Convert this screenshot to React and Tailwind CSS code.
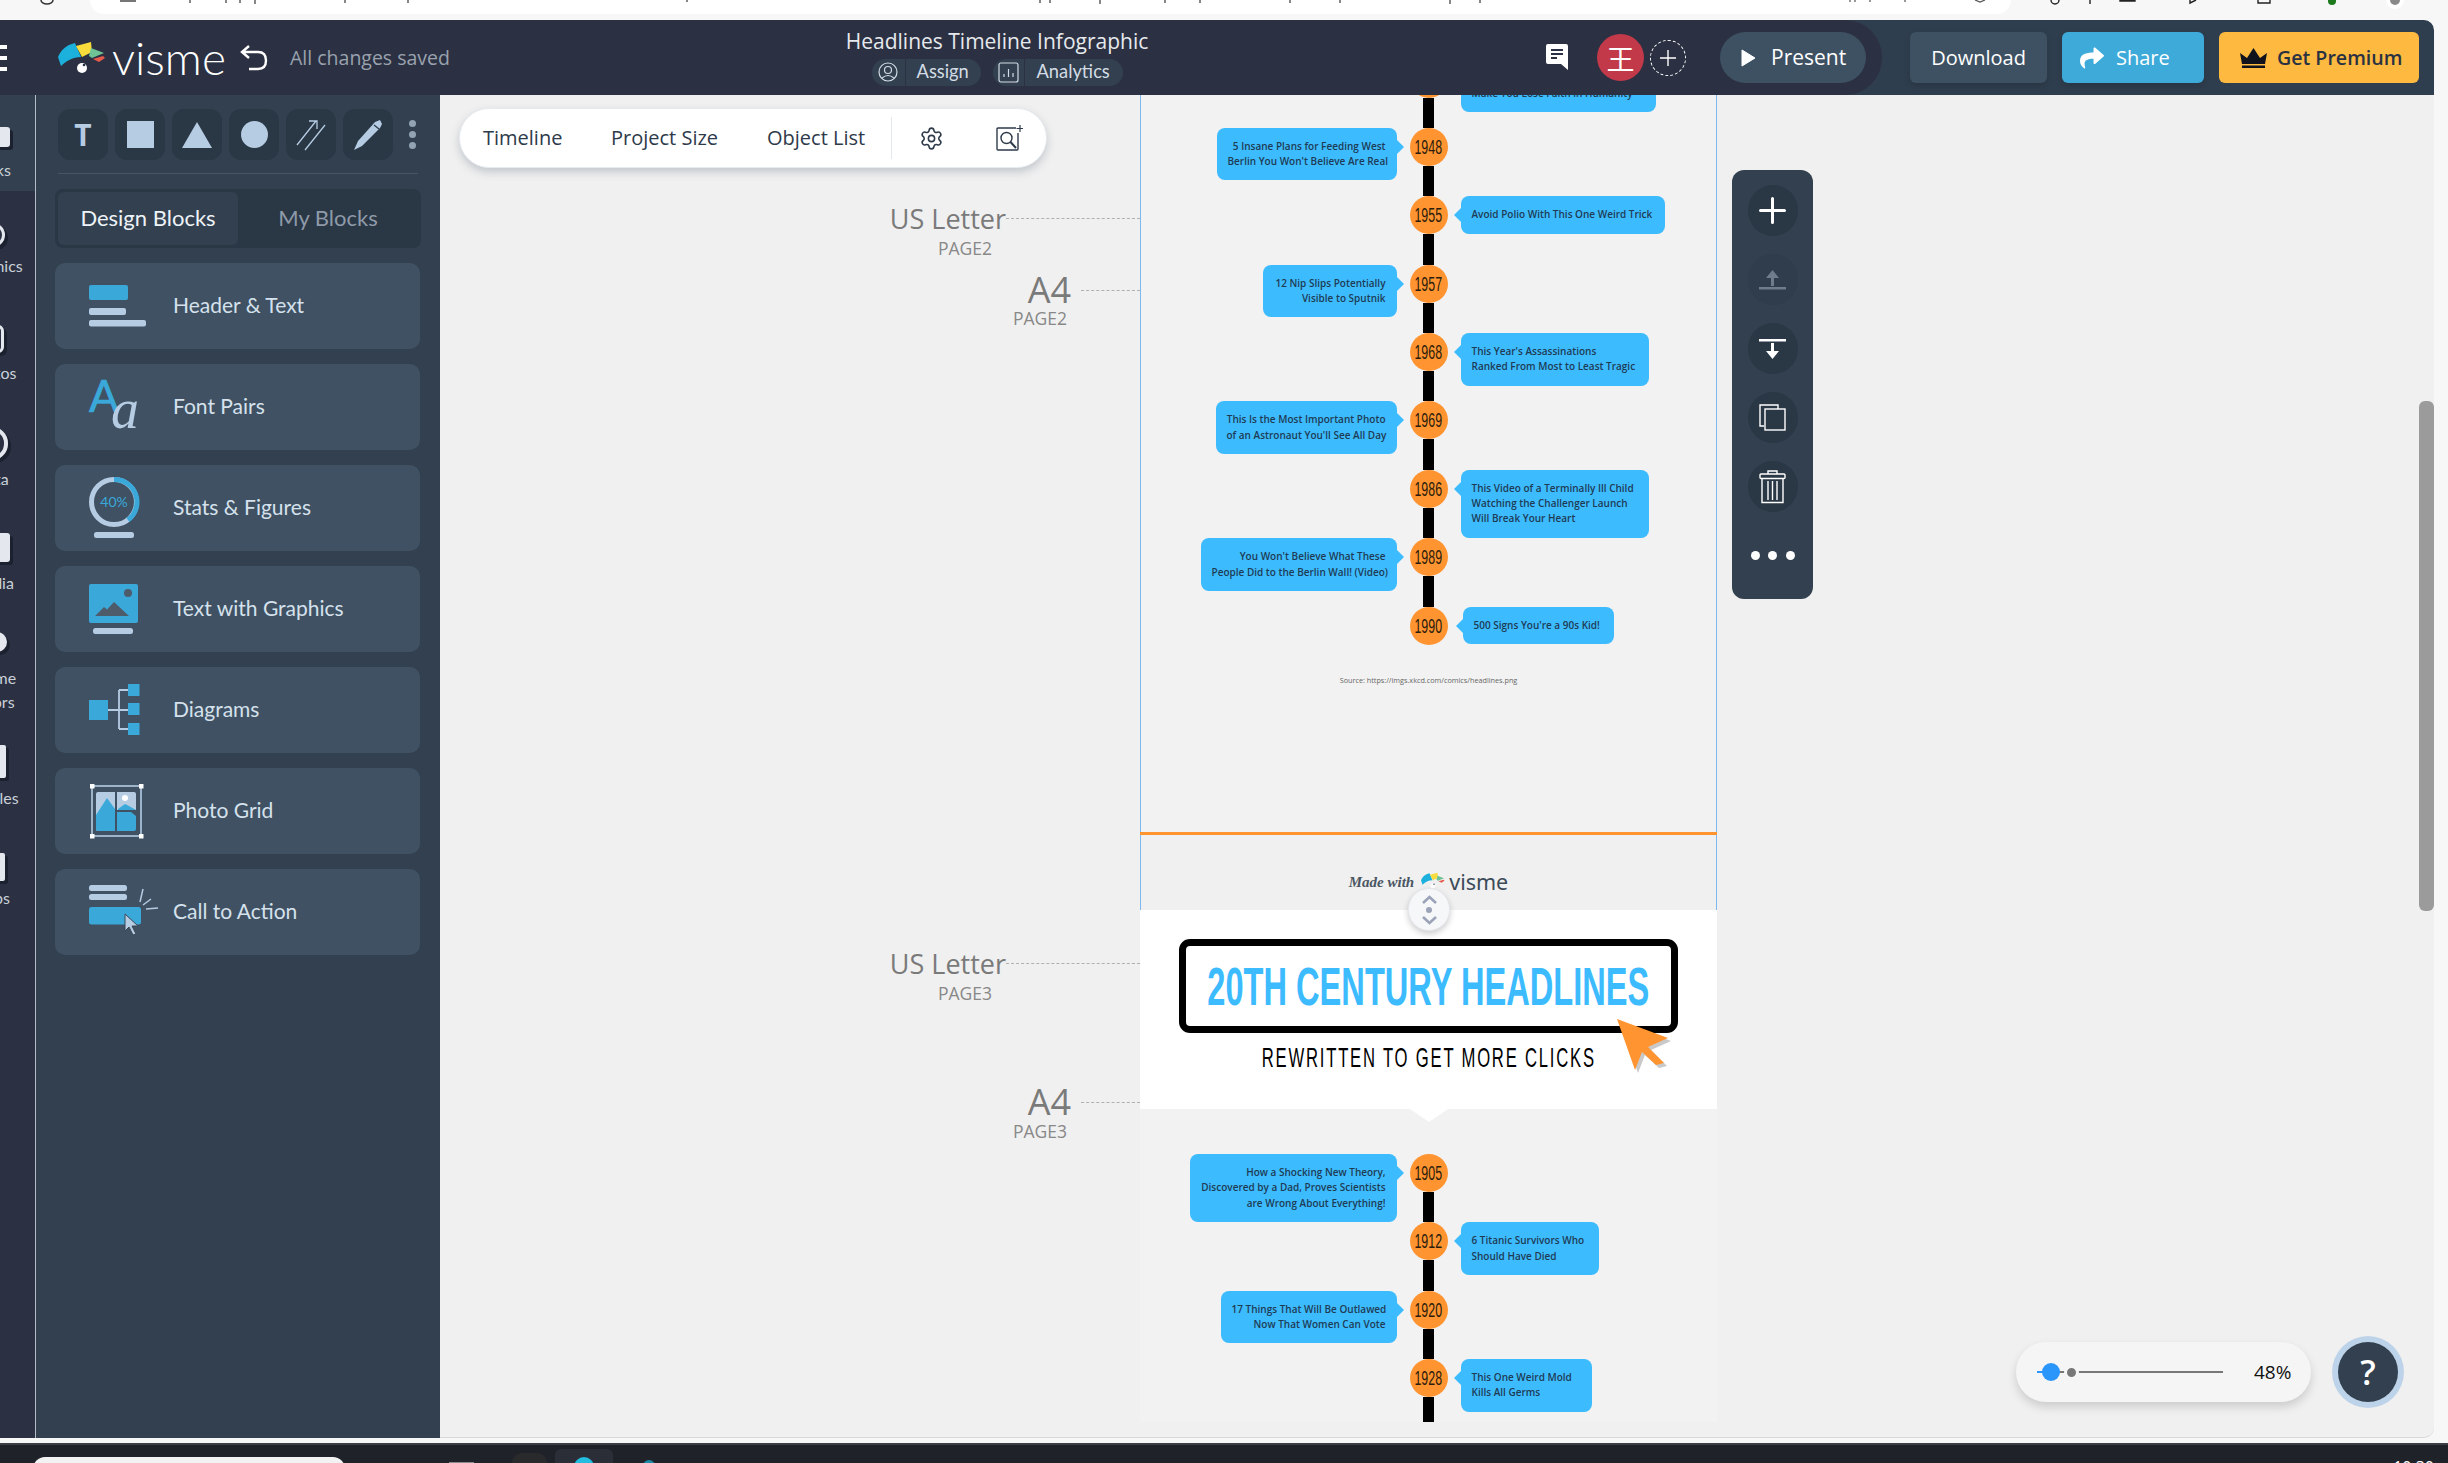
import React from 'react';
import { Settings } from 'lucide-react';
import { FaShare } from 'react-icons/fa';

function Logo({ className }) {
  return (
    <svg viewBox="0 0 48 31" className={className}>
      <path d="M0 15 C3 8 8 3 17 1 L23 15 C15 15 8 19 3 24 Z" fill="#1cb0dc" />
      <path d="M18 4 L33 0 L34 10 L24 15 Z" fill="#f7dc3c" />
      <path d="M33 6 L46 11 L34 16 L31 14 Z" fill="#6fc295" />
      <path d="M35 17 L45 14 L47 16 L41 20 Z" fill="#e65a4c" />
      <circle cx="24" cy="26" r="5" fill="#fff" />
      <circle cx="26" cy="23" r="1.3" fill="#2b3142" />
    </svg>
  );
}

const railItems = [
  { label: ['Blocks'], wrap: 'h-[96px] pt-[32px] bg-[#32404f]', shift: '-ml-[52px]', icon: 'h-[20px] w-[44px] rounded-[3px] bg-[#e4e8ee]', text: 'mt-[11px]' },
  { label: ['Graphics'], wrap: 'pt-[32px]', shift: '-ml-[48px]', icon: 'h-[24px] w-[26px] rounded-full border-[3px] border-[#e4e8ee]', text: 'mt-[7px]' },
  { label: ['Photos'], wrap: 'pt-[47px]', shift: '-ml-[48px]', icon: 'h-[28px] w-[24px] rounded-[6px] border-[3px] border-[#e4e8ee]', text: 'mt-[8px]' },
  { label: ['Data'], wrap: 'pt-[42px]', shift: '-ml-[48px]', icon: 'h-[33px] w-[32px] rounded-full border-[4px] border-[#e4e8ee]', text: 'mt-[7px]' },
  { label: ['Media'], wrap: 'pt-[42px]', shift: '-ml-[48px]', icon: 'h-[29px] w-[36px] rounded-[3px] bg-[#e4e8ee]', text: 'mt-[9px]' },
  { label: ['Theme', 'Colors'], wrap: 'pt-[37px]', shift: '-ml-[48px]', icon: 'h-[20px] w-[30px] rounded-full bg-[#e4e8ee]', text: 'mt-[14px]' },
  { label: ['Articles'], wrap: 'pt-[31px]', shift: '-ml-[48px]', icon: 'h-[33px] w-[28px] rounded-[2px] bg-[#e4e8ee]', text: 'mt-[8px]' },
  { label: ['Apps'], wrap: 'pt-[43px]', shift: '-ml-[48px]', icon: 'h-[28px] w-[26px] rounded-[2px] bg-[#e4e8ee]', text: 'mt-[5px]' },
];

function Rail() {
  return (
    <div className="w-[36px] shrink-0 overflow-hidden border-r border-r-[#b6bcc4] bg-[#2b3142]">
      {railItems.map((r) => (
        <div key={r.label[0]} className={r.wrap}>
          <div className={`flex w-[80px] flex-col items-center ${r.shift}`}>
            <div className={`shadow-[3px_3px_0_#1c2130] ${r.icon}`} />
            <div className={`text-center font-['Lato'] text-[16px] leading-[24px] text-[#c9d0d8] ${r.text}`}>
              {r.label.map((l) => (
                <div key={l}>{l}</div>
              ))}
            </div>
          </div>
        </div>
      ))}
    </div>
  );
}

function ToolBtn({ children }) {
  return (
    <div className="flex h-[51px] w-[50px] items-center justify-center rounded-[12px] bg-[#2a3745]">{children}</div>
  );
}

const LIGHT = '#b6cce3';
const BLUE = '#3aa9da';

const blocks = [
  {
    name: 'Header & Text',
    icon: (
      <>
        <rect x="0" y="22" width="39" height="15" rx="2" fill={BLUE} />
        <rect x="0" y="45" width="37" height="7" rx="2" fill={LIGHT} />
        <rect x="0" y="57" width="57" height="6.5" rx="2" fill={LIGHT} />
      </>
    ),
  },
  {
    name: 'Font Pairs',
    icon: (
      <>
        <text x="0" y="48" fontFamily="Lato" fontSize="44" stroke={BLUE} strokeWidth="0.7" fill={BLUE}>A</text>
        <text x="22" y="64" fontFamily="Liberation Serif" fontStyle="italic" fontSize="56" fill={LIGHT}>a</text>
      </>
    ),
  },
  {
    name: 'Stats & Figures',
    icon: (
      <>
        <circle cx="25" cy="37" r="22.5" fill="none" stroke={LIGHT} strokeWidth="5" />
        <path d="M25 14.5 A22.5 22.5 0 0 1 39 55" fill="none" stroke={BLUE} strokeWidth="5" />
        <text x="25" y="42" textAnchor="middle" fontFamily="Lato" fontSize="14" fill={BLUE}>40%</text>
        <rect x="5" y="67" width="40" height="6" rx="2.5" fill={LIGHT} />
      </>
    ),
  },
  {
    name: 'Text with Graphics',
    icon: (
      <>
        <rect x="0" y="18" width="49" height="39" rx="2" fill={BLUE} />
        <circle cx="39" cy="27" r="4" fill="#4e5b6a" />
        <path d="M6 50 L15 41 L18 43.5 L25 36 L40 50 Z" fill="#4e5b6a" />
        <rect x="4" y="62" width="40" height="6" rx="2.5" fill={LIGHT} />
      </>
    ),
  },
  {
    name: 'Diagrams',
    icon: (
      <>
        <path d="M19 43 H39 M30 23 V62 M30 23 H39 M30 62 H39" fill="none" stroke={LIGHT} strokeWidth="1.8" />
        <rect x="0" y="33" width="19" height="20" fill={BLUE} />
        <rect x="39" y="17" width="11.5" height="12" fill={BLUE} />
        <rect x="39" y="36" width="11.5" height="12" fill={BLUE} />
        <rect x="39" y="56" width="11.5" height="12" fill={BLUE} />
      </>
    ),
  },
  {
    name: 'Photo Grid',
    icon: (
      <>
        <rect x="3" y="18" width="49" height="50" fill="none" stroke={LIGHT} strokeWidth="1.6" />
        <rect x="1" y="16" width="4.5" height="4.5" fill="#fff" />
        <rect x="50" y="16" width="4.5" height="4.5" fill="#fff" />
        <rect x="1" y="66" width="4.5" height="4.5" fill="#fff" />
        <rect x="50" y="66" width="4.5" height="4.5" fill="#fff" />
        <path d="M7 26 Q7 24 9 24 H26 V63 H9 Q7 63 7 61 Z" fill={LIGHT} />
        <path d="M7 47 L18 30 L26 41 V63 H9 Q7 63 7 61 Z" fill={BLUE} />
        <path d="M28 24 H45 Q47 24 47 26 V42 H28 Z" fill={LIGHT} />
        <circle cx="36" cy="30" r="3" fill="#fff" />
        <path d="M29 41 L36 36 L40 38 L47 42 H29 Z" fill={BLUE} />
        <path d="M28 44 H42 L47 48 V61 Q47 63 45 63 H28 Z" fill={BLUE} />
      </>
    ),
  },
  {
    name: 'Call to Action',
    icon: (
      <>
        <rect x="0" y="16" width="38" height="6" rx="2.5" fill={LIGHT} />
        <rect x="0" y="25" width="38" height="6" rx="2.5" fill={LIGHT} />
        <rect x="0" y="38" width="52" height="17.5" rx="2.5" fill={BLUE} />
        <path d="M36 45 L36 62 L40 58 L44 66 L47 65 L43 57 L49 57 Z" fill={LIGHT} stroke="#3a4655" strokeWidth="1" />
        <path d="M51 33 L54 20 M54 36 L62 30 M57 40 L69 39" stroke={LIGHT} strokeWidth="1.5" fill="none" />
      </>
    ),
  },
];

function Panel() {
  return (
    <div className="flex w-[404px] shrink-0 flex-col bg-[#32404f] pl-[19px] pr-[20px] pt-[14px]">
      <div className="flex items-center gap-[7px] pl-[3px]">
        <ToolBtn>
          <span className="font-['Open_Sans'] text-[30px] font-bold leading-none text-[#b6cce3]">T</span>
        </ToolBtn>
        <ToolBtn>
          <div className="h-[27px] w-[27px] bg-[#b6cce3]" />
        </ToolBtn>
        <ToolBtn>
          <svg width="30" height="26" viewBox="0 0 30 26"><path d="M15 0 L30 26 H0 Z" fill="#b6cce3" /></svg>
        </ToolBtn>
        <ToolBtn>
          <div className="h-[27px] w-[27px] rounded-full bg-[#b6cce3]" />
        </ToolBtn>
        <ToolBtn>
          <svg width="30" height="32" viewBox="0 0 30 32" fill="none" stroke="#b6cce3" strokeWidth="1.3">
            <path d="M1 26 L20 2 M13 2 H21 V10 M9 31 L29 6" />
          </svg>
        </ToolBtn>
        <ToolBtn>
          <svg width="30" height="30" viewBox="0 0 30 30"><path d="M22 2 L27 0 L29 4 L27 8 L9 26 L1 30 L5 21 Z" fill="#b6cce3" /><path d="M21 5 L26 9" stroke="#2a3745" strokeWidth="1.3" /></svg>
        </ToolBtn>
        <div className="ml-[9px] flex flex-col gap-[4px]">
          <div className="h-[7px] w-[7px] rounded-full bg-[#93a3b3]" />
          <div className="h-[7px] w-[7px] rounded-full bg-[#93a3b3]" />
          <div className="h-[7px] w-[7px] rounded-full bg-[#93a3b3]" />
        </div>
      </div>
      <div className="ml-[3px] mr-[2px] mt-[13px] h-[1px] bg-[#465665]" />
      <div className="mt-[15px] flex h-[59px] w-[366px] rounded-[8px] bg-[#2a3745] p-[3px]">
        <div className="flex w-[180px] items-center justify-center rounded-[6px] bg-[#32404f] pb-[3px] font-['Lato'] text-[22px] text-[#eef3f8]">Design Blocks</div>
        <div className="flex flex-1 items-center justify-center pb-[3px] font-['Lato'] text-[22px] text-[#8e9aa9]">My Blocks</div>
      </div>
      <div className="mt-[15px] flex flex-col gap-[15px]">
        {blocks.map((b) => (
          <div key={b.name} className="flex h-[86px] w-[365px] items-center rounded-[10px] bg-[#3f5163] pl-[34px]">
            <svg width="84" height="86" viewBox="0 0 84 86" className="shrink-0 overflow-visible">{b.icon}</svg>
            <span className="pb-[3px] font-['Lato'] text-[21px] text-[#d5e1ec]">{b.name}</span>
          </div>
        ))}
      </div>
    </div>
  );
}

function Node({ year, connector }) {
  return (
    <div className="flex flex-col items-center">
      <div className="flex h-[38px] w-[38px] shrink-0 items-center justify-center rounded-full bg-[#ff9430]">
        <span className="inline-block scale-x-[0.62] whitespace-nowrap font-['Liberation_Sans'] text-[20px] leading-none text-[#2b1c0c]">{year}</span>
      </div>
      {connector && <div className="h-[30.4px] w-[11px] shrink-0 bg-black" />}
    </div>
  );
}

function Row({ year, side, w, lines, connector = true, extra = '' }) {
  const bubble = (
    <div className={`relative rounded-[8px] bg-[#3dbbff] px-[11px] py-[11px] font-['Open_Sans'] text-[10px] font-semibold leading-[15.3px] text-[#1d3c54] ${w} ${extra} ${side === 'l' ? 'text-right' : 'text-left'}`}>
      {lines.map((l) => (
        <div key={l} className="whitespace-nowrap">{l}</div>
      ))}
      <div className={side === 'l'
        ? 'absolute -right-[7px] top-[12px] h-0 w-0 border-y-[7px] border-l-[7px] border-y-transparent border-l-[#3dbbff]'
        : 'absolute -left-[7px] top-[12px] h-0 w-0 border-y-[7px] border-r-[7px] border-y-transparent border-r-[#3dbbff]'} />
    </div>
  );
  return (
    <div className="grid h-[68.4px] grid-cols-[1fr_38px_1fr] items-start gap-x-[13px]">
      <div className="flex justify-end">{side === 'l' && bubble}</div>
      <Node year={year} connector={connector} />
      <div className="flex justify-start">{side === 'r' && bubble}</div>
    </div>
  );
}

function PageLabel({ pos, size, name, page, line, gap, mr, rowH }) {
  return (
    <div className={`absolute left-0 flex w-[700px] flex-col ${pos}`}>
      <div className="flex h-[36px] items-center justify-end">
        <span className={`whitespace-nowrap font-['Open_Sans'] leading-none text-[#7a7a7a] ${size}`}>{name}</span>
        <div className={`border-t border-dashed border-t-[#b0b0b0] ${line} ${gap}`} />
      </div>
      <div className={`flex items-center justify-end font-['Open_Sans'] text-[17.5px] leading-none text-[#888888] ${mr} ${rowH}`}>{page}</div>
    </div>
  );
}

function Document() {
  return (
    <div className="-mt-[40px] ml-[700px] w-[577px]">
      <div className="h-[777px] overflow-hidden border-x border-x-[#7db9f0] bg-[#f2f2f2] pt-[4.5px]">
        <Row year="1942" side="r" w="w-[195px]" lines={['\u00a0', 'Make You Lose Faith in Humanity']} />
        <Row year="1948" side="l" w="w-[180px]" lines={['5 Insane Plans for Feeding West', "Berlin You Won't Believe Are Real"]} />
        <Row year="1955" side="r" w="w-[204px]" lines={['Avoid Polio With This One Weird Trick']} />
        <Row year="1957" side="l" w="w-[134px]" lines={['12 Nip Slips Potentially', 'Visible to Sputnik']} />
        <Row year="1968" side="r" w="w-[188px]" lines={["This Year's Assassinations", 'Ranked From Most to Least Tragic']} />
        <Row year="1969" side="l" w="w-[181px]" lines={['This Is the Most Important Photo', "of an Astronaut You'll See All Day"]} />
        <Row year="1986" side="r" w="w-[188px]" lines={['This Video of a Terminally Ill Child', 'Watching the Challenger Launch', 'Will Break Your Heart']} />
        <Row year="1989" side="l" w="w-[196px]" lines={["You Won't Believe What These", 'People Did to the Berlin Wall! (Video)']} />
        <Row year="1990" side="r" w="w-[151px]" extra="ml-[2px]" connector={false} lines={["500 Signs You're a 90s Kid!"]} />
        <div className="text-center font-['Open_Sans'] text-[7.25px] leading-[10px] text-[#666666]">Source: https://imgs.xkcd.com/comics/headlines.png</div>
      </div>
      <div className="h-[3px] bg-[#ff9430]" />
      <div className="flex h-[75px] items-start justify-center gap-[7px] border-x border-x-[#7db9f0] bg-[#f0f0f0] pt-[36px]">
        <span className="font-['Liberation_Serif'] text-[15px] font-bold italic leading-[22px] text-[#4a5663]">Made with</span>
        <Logo className="mt-[1px] h-[17px] w-[24px]" />
        <span className="-ml-[3px] font-['Noto_Sans'] text-[21.5px] leading-[22px] text-[#3c4a58]">visme</span>
      </div>
      <div className="relative flex h-[199px] flex-col items-center bg-white pt-[29px]">
        <div className="flex h-[94px] w-[499px] items-center justify-center rounded-[11px] border-[7px] border-black">
          <span className="inline-block scale-x-[0.615] whitespace-nowrap font-['Liberation_Sans'] text-[53px] font-bold leading-none text-[#3dbbff]">20TH CENTURY HEADLINES</span>
        </div>
        <span className="mt-[10px] inline-block scale-x-[0.595] whitespace-nowrap font-['Liberation_Sans'] text-[28px] leading-[30px] tracking-[3px] text-black">REWRITTEN TO GET MORE CLICKS</span>
        <svg width="60" height="60" viewBox="0 0 60 60" className="absolute left-[477px] top-[109px] overflow-visible">
          <path d="M3 3 L54 22 L34 31 L50 47 L42 49 L28 36 L21 54 Z" fill="#c9c9c9" />
          <path d="M0 0 L51 19 L31 28 L47 44 L39 46 L25 33 L18 51 Z" fill="#ff9430" />
        </svg>
        <div className="absolute left-[268px] top-[-22px] flex h-[43px] w-[42px] flex-col items-center justify-center gap-[3px] rounded-full border border-[#e4e7ec] bg-[#f6f7f9] shadow-[0_3px_6px_rgba(0,0,0,0.2)]">
          <svg width="15" height="9" viewBox="0 0 15 9" fill="none" stroke="#9aa3b8" strokeWidth="2.6"><path d="M1 8 L7.5 2 L14 8" /></svg>
          <div className="h-[6px] w-[6px] rounded-full bg-[#9aa3b8]" />
          <svg width="15" height="9" viewBox="0 0 15 9" fill="none" stroke="#9aa3b8" strokeWidth="2.6"><path d="M1 1 L7.5 7 L14 1" /></svg>
        </div>
      </div>
      <div className="h-[313px] overflow-hidden bg-[#f2f2f2]">
        <div className="mx-auto h-0 w-0 border-x-[19px] border-t-[13px] border-x-transparent border-t-white" />
        <div className="pt-[32px]">
          <Row year="1905" side="l" w="w-[207px]" lines={['How a Shocking New Theory,', 'Discovered by a Dad, Proves Scientists', 'are Wrong About Everything!']} />
          <Row year="1912" side="r" w="w-[138px]" lines={['6 Titanic Survivors Who', 'Should Have Died']} />
          <Row year="1920" side="l" w="w-[176px]" lines={['17 Things That Will Be Outlawed', 'Now That Women Can Vote']} />
          <Row year="1928" side="r" w="w-[131px]" lines={['This One Weird Mold', 'Kills All Germs']} />
        </div>
      </div>
    </div>
  );
}

function SideBtn({ children, dim }) {
  return (
    <div className={`flex h-[51px] w-[50px] items-center justify-center rounded-full ${dim ? 'bg-[#2f3d4c]' : 'bg-[#2a3745]'}`}>{children}</div>
  );
}

function Canvas() {
  return (
    <div className="relative flex-1 overflow-hidden rounded-br-[10px] border-b border-b-[#d9d9d9] bg-[#f0f0f0]">
      <Document />

      <PageLabel pos="top-[105px]" size="text-[27px]" name="US Letter" page="PAGE2" line="w-[134px]" gap="ml-[0px]" mr="mr-[148px]" rowH="h-[26px]" />
      <PageLabel pos="top-[177px]" size="text-[36px]" name="A4" page="PAGE2" line="w-[59px]" gap="ml-[10px]" mr="mr-[73px]" rowH="h-[21px]" />
      <PageLabel pos="top-[850px]" size="text-[27px]" name="US Letter" page="PAGE3" line="w-[134px]" gap="ml-[0px]" mr="mr-[148px]" rowH="h-[26px]" />
      <PageLabel pos="top-[989px]" size="text-[36px]" name="A4" page="PAGE3" line="w-[59px]" gap="ml-[10px]" mr="mr-[73px]" rowH="h-[23px]" />

      <div className="absolute left-[19px] top-[13px] flex h-[60px] w-[588px] items-center rounded-full border border-[#e6ebf0] bg-white pl-[23px] font-['Open_Sans'] text-[20px] text-[#2d3a4a] shadow-[0_4px_8px_rgba(60,80,100,0.25)]">
        <span className="w-[128px] whitespace-nowrap">Timeline</span>
        <span className="w-[156px] whitespace-nowrap">Project Size</span>
        <span className="w-[124px] whitespace-nowrap">Object List</span>
        <div className="h-[42px] w-[1px] bg-[#e2e8ee]" />
        <Settings size={25} strokeWidth={1.5} className="ml-[27px] text-[#2d3a4a]" />
        <svg width="27" height="27" viewBox="0 0 27 27" fill="none" stroke="#2d3a4a" strokeWidth="1.4" className="ml-[52px]">
          <path d="M20 3 H2 Q1 3 1 4 V24 Q1 25 2 25 H21 Q22 25 22 24 V8" />
          <circle cx="10.5" cy="13" r="5.5" />
          <path d="M14.5 17 L20 23" strokeWidth="2" />
          <path d="M24 0 V7 M20.5 3.5 H27" strokeWidth="1.2" />
        </svg>
      </div>

      <div className="absolute left-[1292px] top-[75px] flex h-[429px] w-[81px] flex-col items-center gap-[18px] rounded-[12px] bg-[#32404f] pt-[15px]">
        <SideBtn>
          <svg width="27" height="27" viewBox="0 0 27 27" stroke="#fff" strokeWidth="3" strokeLinecap="round"><path d="M13.5 1.5 V25.5 M1.5 13.5 H25.5" /></svg>
        </SideBtn>
        <SideBtn dim>
          <svg width="27" height="20" viewBox="0 0 27 20"><path d="M13.5 0 L20 8 H15 V16 H12 V8 H7 Z" fill="#6f7d8b" /><rect x="0" y="17" width="27" height="2.5" fill="#6f7d8b" /></svg>
        </SideBtn>
        <SideBtn>
          <svg width="27" height="20" viewBox="0 0 27 20"><rect x="0" y="0" width="27" height="2.5" fill="#fff" /><path d="M13.5 20 L20 12 H15 V4 H12 V12 H7 Z" fill="#fff" /></svg>
        </SideBtn>
        <SideBtn>
          <svg width="27" height="27" viewBox="0 0 27 27" fill="none" stroke="#fff" strokeWidth="1.4"><path d="M5 22 H1 V1 H19 V5" /><rect x="6" y="5" width="20" height="21" /></svg>
        </SideBtn>
        <SideBtn>
          <svg width="27" height="34" viewBox="0 0 27 34" fill="none" stroke="#fff" strokeWidth="1.4"><path d="M9 4 V1 H18 V4" /><rect x="1" y="4" width="25" height="4.5" rx="1" /><path d="M3 8.5 V32.5 H24 V8.5 M9 11 V30 M13.5 11 V30 M18 11 V30" /></svg>
        </SideBtn>
        <div className="mt-[21px] flex gap-[8.5px]">
          <div className="h-[9px] w-[9px] rounded-full bg-white" />
          <div className="h-[9px] w-[9px] rounded-full bg-white" />
          <div className="h-[9px] w-[9px] rounded-full bg-white" />
        </div>
      </div>

      <div className="absolute right-0 top-[306px] h-[510px] w-[15px] rounded-[6px] bg-[#9b9b9b]" />

      <div className="absolute left-[1576px] top-[1247px] flex h-[60px] w-[295px] items-center rounded-full bg-[#f5f5f5] shadow-[0_5px_10px_rgba(0,0,0,0.15)]">
        <div className="relative ml-[21px] h-[2px] w-[186px] bg-[#777777]">
          <div className="absolute -top-[8px] left-[5px] h-[18px] w-[18px] rounded-full bg-[#2a96fb]" />
          <div className="absolute left-0 top-0 h-[2px] w-[8px] bg-[#2a96fb]" />
          <div className="absolute -top-[6.5px] left-[27px] h-[15px] w-[15px] rounded-full border-[3px] border-[#f5f5f5] bg-[#777777]" />
        </div>
        <span className="ml-[31px] font-['Open_Sans'] text-[19px] leading-none text-[#111111]">48%</span>
      </div>

      <div className="absolute left-[1898px] top-[1247px] flex h-[60px] w-[60px] items-center justify-center rounded-full bg-[#32404f] font-['Open_Sans'] text-[34px] font-semibold leading-none text-white shadow-[0_0_0_6px_#bdd3ea]">?</div>
    </div>
  );
}

function Header() {
  return (
    <div className="flex h-[75px] shrink-0 rounded-tr-[10px] bg-[#2f3e4e]">
      <div className="flex w-[1882px] shrink-0 items-center rounded-r-[37px] bg-[#2b3142]">
        <div className="flex w-[7px] flex-col gap-[7px]">
          <div className="h-[4px] bg-white" />
          <div className="h-[4px] bg-white" />
          <div className="h-[4px] bg-white" />
        </div>
        <Logo className="ml-[51px] h-[31px] w-[48px] shrink-0" />
        <span className="ml-[6px] w-[112px] font-['Lato'] text-[46px] font-light leading-none text-white">visme</span>
        <svg width="28" height="26" viewBox="0 0 28 26" fill="none" stroke="#fff" strokeWidth="2.4" className="ml-[16px] shrink-0">
          <path d="M9 1 L2 7 L9 13 M2 7 H18 Q26 7 26 15.5 Q26 24 18 24 H9" />
        </svg>
        <span className="ml-[22px] w-[160px] whitespace-nowrap font-['Open_Sans'] text-[19.5px] text-[#9aa2ae]">All changes saved</span>
        <div className="mb-[3px] ml-[396px] flex w-[302px] shrink-0 flex-col items-center">
          <span className="whitespace-nowrap font-['Open_Sans'] text-[21px] leading-[28px] text-[#e6e9ed]">Headlines Timeline Infographic</span>
          <div className="mt-[4px] flex gap-[12px] font-['Lato'] text-[18.3px] text-[#d3dce5]">
            <div className="flex h-[27px] w-[109px] items-center rounded-full bg-[#32404f]">
              <div className="flex h-full w-[34px] items-center justify-center border-r border-r-[#2b3142]">
                <svg width="20" height="22" viewBox="0 0 20 22" fill="none" stroke="#d3dce5" strokeWidth="1.2"><circle cx="10" cy="11" r="9" /><circle cx="10" cy="9" r="3.5" /><path d="M4 17 Q10 12 16 17" /></svg>
              </div>
              <span className="ml-[11px]">Assign</span>
            </div>
            <div className="flex h-[27px] w-[130px] items-center rounded-full bg-[#32404f]">
              <div className="flex h-full w-[32px] items-center justify-center border-r border-r-[#2b3142]">
                <svg width="21" height="21" viewBox="0 0 21 21" fill="none" stroke="#d3dce5" strokeWidth="1.2"><rect x="1" y="1" width="19" height="19" rx="2" /><path d="M6 15 V12 M10.500 15 V7 M15 15 V11" /></svg>
              </div>
              <span className="ml-[12px]">Analytics</span>
            </div>
          </div>
        </div>
        <svg width="22" height="27" viewBox="0 0 22 27" className="ml-[398px] shrink-0">
          <path d="M2 0 H20 Q22 0 22 2 V26 L15 20 H2 Q0 20 0 18 V2 Q0 0 2 0 Z" fill="#fff" />
          <path d="M5 6 H17 M5 10 H17 M5 14 H11" stroke="#2b3142" strokeWidth="1.8" />
        </svg>
        <div className="ml-[29px] flex h-[47px] w-[47px] shrink-0 items-center justify-center rounded-full bg-[#c2394a] font-['Noto_Sans_CJK_SC',sans-serif] text-[28px] leading-none text-white">王</div>
        <div className="ml-[6px] flex h-[36px] w-[36px] shrink-0 items-center justify-center rounded-full border border-dashed border-white">
          <svg width="18" height="18" viewBox="0 0 18 18" stroke="#fff" strokeWidth="1.4"><path d="M9 1 V17 M1 9 H17" /></svg>
        </div>
        <div className="ml-[34px] flex h-[51px] w-[146px] shrink-0 items-center rounded-full bg-[#3e5162] pl-[21px]">
          <svg width="14" height="18" viewBox="0 0 14 18"><path d="M1 1 L14 9 L1 17 Z" fill="#fff" stroke="#fff" strokeLinejoin="round" /></svg>
          <span className="ml-[16px] font-['Open_Sans'] text-[21px] text-white">Present</span>
        </div>
      </div>
      <div className="ml-[28px] flex h-[51px] w-[137px] items-center justify-center self-center rounded-[6px] bg-[#3e5162] font-['Open_Sans'] text-[20px] text-white shadow-[0_3px_6px_rgba(0,0,0,0.15)]">Download</div>
      <div className="ml-[15px] flex h-[51px] w-[142px] items-center self-center rounded-[6px] bg-[#3daad9] pl-[18px] font-['Open_Sans'] text-[20px] text-white shadow-[0_3px_6px_rgba(0,0,0,0.15)]">
        <FaShare size={24} />
        <span className="ml-[12px]">Share</span>
      </div>
      <div className="ml-[15px] flex h-[51px] w-[200px] items-center self-center rounded-[6px] bg-[#fdb940] pl-[20px] font-['Open_Sans'] text-[19.6px] font-semibold text-[#2a3242]">
        <svg width="29" height="20" viewBox="0 0 29 20" className="shrink-0"><path d="M1 5 L8 10 L14.500 0 L21 10 L28 5 L26 16 H3 Z" fill="#10131c" /><rect x="3" y="17.500" width="23" height="2.500" fill="#10131c" /></svg>
        <span className="ml-[9px] whitespace-nowrap">Get Premium</span>
      </div>
    </div>
  );
}

function ChromeStrip() {
  return (
    <div className="relative h-[20px] shrink-0">
      <div className="ml-[90px] h-[14px] w-[1921px] rounded-b-[20px] bg-white" />
      <svg width="2448" height="20" viewBox="0 0 2448 20" className="absolute left-0 top-0">
        <path d="M41 0 A6 4 0 0 0 53 0" fill="none" stroke="#333" strokeWidth="1.5" />
        <rect x="120" y="0" width="16" height="2" fill="#777" />
        <path d="M190 0 V3 M226 0 V3 M240 0 V3 M255 0 V4 M345 0 V3 M408 0 V3 M687 0 V2" stroke="#555" strokeWidth="1.4" />
        <path d="M1040 0 V3 M1050 0 V3 M1100 0 V4 M1165 0 V3 M1200 0 V3 M1290 0 V3 M1340 0 V3 M1450 0 V4 M1480 0 V3" stroke="#555" strokeWidth="1.4" />
        <path d="M1850 0 V2 M1855 0 V2 M1870 0 V2 M1905 0 V2 M1975 0 L1980 2 L1985 0" stroke="#555" strokeWidth="1.2" fill="none" />
        <circle cx="2055" cy="0" r="4" fill="none" stroke="#222" strokeWidth="1.4" />
        <path d="M2090 0 V4 M2120 0 H2135 V1 H2120 Z M2190 0 L2190 3 L2196 0 M2258 0 V3 H2270 V0" stroke="#222" strokeWidth="1.4" fill="none" />
        <circle cx="2332" cy="1" r="4" fill="#1c7a1c" />
        <circle cx="2395" cy="0" r="9" fill="#fff" />
        <circle cx="2395" cy="0" r="5" fill="#8a8a8a" />
      </svg>
    </div>
  );
}

function Taskbar() {
  return (
    <div className="relative flex h-[20px] shrink-0 items-start overflow-hidden border-t-[2px] border-t-[#3b3e45] bg-[#1f2229] text-white">
      <div className="ml-[33px] mt-[12px] h-[12px] w-[312px] rounded-t-[12px] bg-[#f2f2f2]" />
      <div className="ml-[104px] mt-[17px] h-[4px] w-[25px] bg-[#8a8a8a]" />
      <div className="ml-[38px] mt-[8px] h-[20px] w-[35px] rounded-full bg-[#2a2a2c]" />
      <div className="ml-[8px] mt-[4px] flex h-[24px] w-[58px] justify-center rounded-t-[6px] bg-[#2b2e36] pt-[8px]">
        <div className="h-[20px] w-[20px] rounded-full bg-[#23bde0]" />
      </div>
      <div className="ml-[30px] mt-[15px] h-[12px] w-[12px] rounded-full bg-[#1c8ba8]" />
      <div className="ml-auto mr-[14px] mt-[14px] font-['Open_Sans'] text-[16px] leading-none">10:30</div>
    </div>
  );
}

export default function App() {
  return (
    <div className="flex h-[1463px] w-[2448px] flex-col overflow-hidden bg-[#f7f7f7]">
      <ChromeStrip />
      <div className="flex h-[1418px] w-[2434px] shrink-0 flex-col">
        <Header />
        <div className="flex min-h-0 flex-1">
          <Rail />
          <Panel />
          <Canvas />
        </div>
      </div>
      <div className="h-[5px] shrink-0" />
      <Taskbar />
    </div>
  );
}
